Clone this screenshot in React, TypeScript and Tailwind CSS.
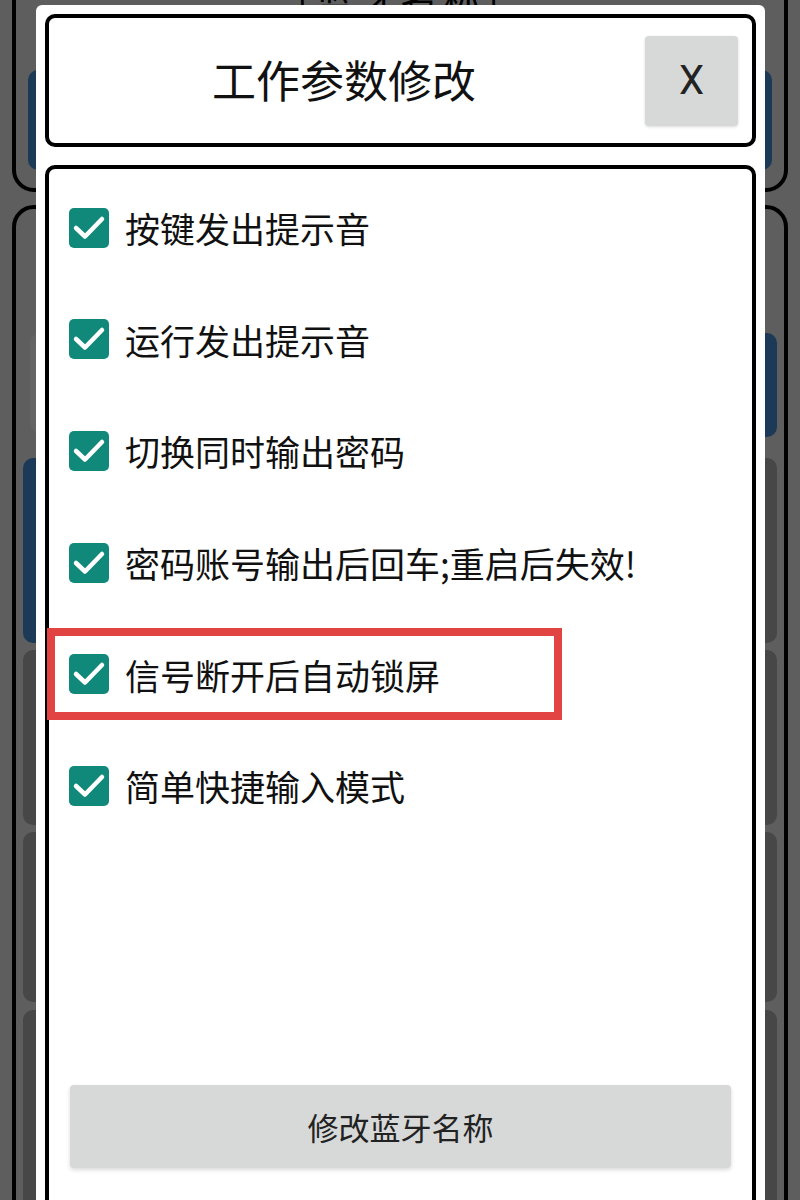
import React from "react";

const items = [
  "按键发出提示音",
  "运行发出提示音",
  "切换同时输出密码",
  "密码账号输出后回车;重启后失效!",
  "信号断开后自动锁屏",
  "简单快捷输入模式",
];

function Check() {
  return (
    <div className="w-[40px] h-[40px] rounded-[5px] bg-[#10897a] flex items-center justify-center shrink-0">
      <svg width="40" height="40" viewBox="0 0 40 40">
        <path d="M7 20 L16 28.5 L33 11" fill="none" stroke="white" strokeWidth="4.5" strokeLinecap="round" strokeLinejoin="round" />
      </svg>
    </div>
  );
}

export default function App() {
  const cjk = { fontFamily: '"Noto Sans CJK SC", "Noto Sans", sans-serif' };
  return (
    <div className="relative w-[800px] h-[1200px] overflow-hidden bg-[#5e5e5e]" style={cjk}>
      {/* dimmed background app */}
      <div className="flex flex-col">
        <div className="mx-[12px] mt-[-60px] h-[252px] border-[4px] border-black rounded-b-[22px] flex flex-col px-[12px]">
          <div className="h-[68px] flex items-end justify-center text-[38px] text-black leading-none">
            <span className="translate-y-[4px] tracking-[4px]">［蓝牙名称］</span>
          </div>
          <div className="mt-[58px] h-[100px] rounded-[10px] bg-[#1c3a57]" />
        </div>
        <div className="mx-[12px] mt-[13px] h-[1100px] border-[4px] border-black rounded-t-[22px] px-[7px] pt-[124px] grid grid-cols-2 gap-x-[8px] content-start">
          <div className="h-[100px] rounded-[10px] bg-[#646464] ml-[7px]" />
          <div className="h-[104px] rounded-[10px] bg-[#1c3a57]" />
          <div className="mt-[21px] h-[185px] rounded-[10px] bg-[#1c3a57]" />
          <div className="mt-[21px] h-[185px] rounded-[10px] bg-[#474747]" />
          <div className="mt-[7px] h-[175px] rounded-[10px] bg-[#474747]" />
          <div className="mt-[7px] h-[175px] rounded-[10px] bg-[#474747]" />
          <div className="mt-[7px] h-[170px] rounded-[10px] bg-[#474747]" />
          <div className="mt-[7px] h-[170px] rounded-[10px] bg-[#474747]" />
          <div className="mt-[8px] h-[200px] rounded-[10px] bg-[#474747]" />
          <div className="mt-[8px] h-[200px] rounded-[10px] bg-[#474747]" />
        </div>
      </div>

      {/* modal */}
      <div className="absolute left-[36px] top-[5px] w-[729px] h-[1220px] bg-white rounded-t-[6px] px-[9px] pt-[9px] flex flex-col">
        <div className="h-[133px] border-[4px] border-black rounded-[10px] flex items-center">
          <div className="flex-1 text-center text-[44px] text-[#111] leading-none pr-[6px] translate-y-[-2px]">工作参数修改</div>
          <div
            className="w-[93px] h-[90px] mr-[14px] bg-[#d7d9d9] rounded-[4px] shadow-[0_1px_3px_rgba(0,0,0,0.15)] flex items-center justify-center text-[40px] text-[#222] leading-none"
            style={{ fontFamily: "Roboto, sans-serif" }}
          >
            X
          </div>
        </div>
        <div className="mt-[18px] h-[1060px] border-[4px] border-black rounded-[10px] flex flex-col pt-[3px]">
          {items.map((t) => (
            <div key={t} className="h-[111.6px] flex items-center pl-[20px] gap-[16px]">
              <Check />
              <span className="text-[35px] text-[#111] leading-none">{t}</span>
            </div>
          ))}
          <div className="mt-[243px] mx-[21px] h-[83px] bg-[#d7d9d9] rounded-[4px] shadow-[0_2px_4px_rgba(0,0,0,0.15)] flex items-center justify-center text-[31px] text-[#222] leading-none">
            修改蓝牙名称
          </div>
        </div>
        {/* annotation highlight */}
        <div className="absolute left-[11px] top-[623px] w-[515px] h-[92px] border-[8px] border-[#e24343]" />
      </div>
    </div>
  );
}
